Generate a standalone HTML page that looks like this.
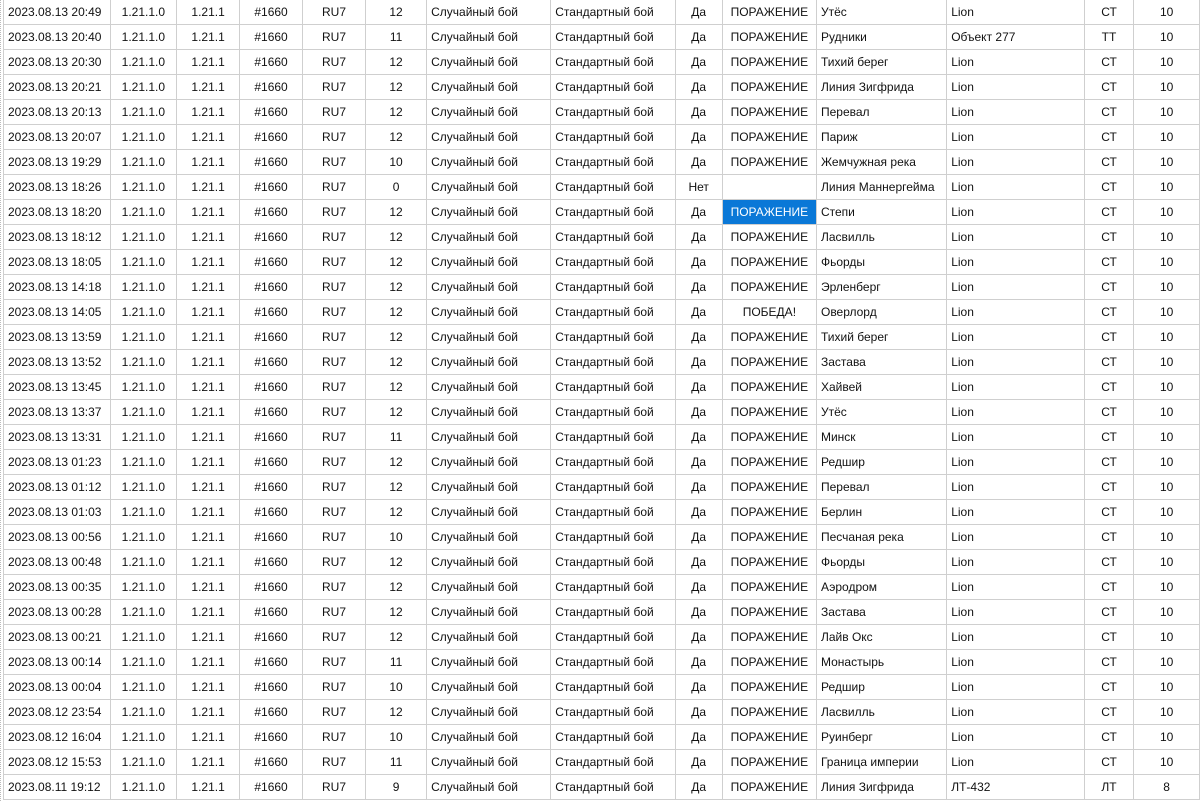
<!DOCTYPE html>
<html><head><meta charset="utf-8"><style>
html,body{margin:0;padding:0;background:#fff;width:1200px;height:801px;overflow:hidden}
table{position:absolute;left:3px;top:-1px;border-collapse:collapse;table-layout:fixed;font-family:"Liberation Sans","DejaVu Sans",sans-serif;font-size:12px;color:#111}
td{border:1px solid #cfcfcf;height:24px;padding:0 4px;white-space:nowrap;overflow:hidden;box-sizing:content-box}
tr{height:25px}
td.c{text-align:center}
td.sel{background:#0a78d7;color:#fff}
#dl{position:absolute;left:0;top:0;width:1px;height:801px;border-left:1px dotted #bbb}
</style></head><body>
<div id="dl"></div>
<table>
<colgroup><col style="width:107px"><col style="width:68px"><col style="width:65px"><col style="width:65px"><col style="width:66px"><col style="width:65px"><col style="width:127px"><col style="width:126px"><col style="width:49px"><col style="width:95px"><col style="width:131px"><col style="width:144px"><col style="width:52px"><col style="width:70px"></colgroup>
<tbody id="tb"></tbody></table>
<script>
var d=[["2023.08.13 20:49",12,"ПОРАЖЕНИЕ","Утёс","Lion","СТ",10],
["2023.08.13 20:40",11,"ПОРАЖЕНИЕ","Рудники","Объект 277","ТТ",10],
["2023.08.13 20:30",12,"ПОРАЖЕНИЕ","Тихий берег","Lion","СТ",10],
["2023.08.13 20:21",12,"ПОРАЖЕНИЕ","Линия Зигфрида","Lion","СТ",10],
["2023.08.13 20:13",12,"ПОРАЖЕНИЕ","Перевал","Lion","СТ",10],
["2023.08.13 20:07",12,"ПОРАЖЕНИЕ","Париж","Lion","СТ",10],
["2023.08.13 19:29",10,"ПОРАЖЕНИЕ","Жемчужная река","Lion","СТ",10],
["2023.08.13 18:26",0,"","Линия Маннергейма","Lion","СТ",10],
["2023.08.13 18:20",12,"ПОРАЖЕНИЕ","Степи","Lion","СТ",10],
["2023.08.13 18:12",12,"ПОРАЖЕНИЕ","Ласвилль","Lion","СТ",10],
["2023.08.13 18:05",12,"ПОРАЖЕНИЕ","Фьорды","Lion","СТ",10],
["2023.08.13 14:18",12,"ПОРАЖЕНИЕ","Эрленберг","Lion","СТ",10],
["2023.08.13 14:05",12,"ПОБЕДА!","Оверлорд","Lion","СТ",10],
["2023.08.13 13:59",12,"ПОРАЖЕНИЕ","Тихий берег","Lion","СТ",10],
["2023.08.13 13:52",12,"ПОРАЖЕНИЕ","Застава","Lion","СТ",10],
["2023.08.13 13:45",12,"ПОРАЖЕНИЕ","Хайвей","Lion","СТ",10],
["2023.08.13 13:37",12,"ПОРАЖЕНИЕ","Утёс","Lion","СТ",10],
["2023.08.13 13:31",11,"ПОРАЖЕНИЕ","Минск","Lion","СТ",10],
["2023.08.13 01:23",12,"ПОРАЖЕНИЕ","Редшир","Lion","СТ",10],
["2023.08.13 01:12",12,"ПОРАЖЕНИЕ","Перевал","Lion","СТ",10],
["2023.08.13 01:03",12,"ПОРАЖЕНИЕ","Берлин","Lion","СТ",10],
["2023.08.13 00:56",10,"ПОРАЖЕНИЕ","Песчаная река","Lion","СТ",10],
["2023.08.13 00:48",12,"ПОРАЖЕНИЕ","Фьорды","Lion","СТ",10],
["2023.08.13 00:35",12,"ПОРАЖЕНИЕ","Аэродром","Lion","СТ",10],
["2023.08.13 00:28",12,"ПОРАЖЕНИЕ","Застава","Lion","СТ",10],
["2023.08.13 00:21",12,"ПОРАЖЕНИЕ","Лайв Окс","Lion","СТ",10],
["2023.08.13 00:14",11,"ПОРАЖЕНИЕ","Монастырь","Lion","СТ",10],
["2023.08.13 00:04",10,"ПОРАЖЕНИЕ","Редшир","Lion","СТ",10],
["2023.08.12 23:54",12,"ПОРАЖЕНИЕ","Ласвилль","Lion","СТ",10],
["2023.08.12 16:04",10,"ПОРАЖЕНИЕ","Руинберг","Lion","СТ",10],
["2023.08.12 15:53",11,"ПОРАЖЕНИЕ","Граница империи","Lion","СТ",10],
["2023.08.11 19:12",9,"ПОРАЖЕНИЕ","Линия Зигфрида","ЛТ-432","ЛТ",8]];
var h="";d.forEach(function(r,i){h+="<tr><td>"+r[0]+"</td><td class=c>1.21.1.0</td><td class=c>1.21.1</td><td class=c>#1660</td><td class=c>RU7</td><td class=c>"+r[1]+"</td><td>Случайный бой</td><td>Стандартный бой</td><td class=c>"+(r[1]?"Да":"Нет")+"</td><td class='c"+(i==8?" sel":"")+"'>"+r[2]+"</td><td>"+r[3]+"</td><td>"+r[4]+"</td><td class=c>"+r[5]+"</td><td class=c>"+r[6]+"</td></tr>";});
document.getElementById("tb").innerHTML=h;
</script>
</body></html>
